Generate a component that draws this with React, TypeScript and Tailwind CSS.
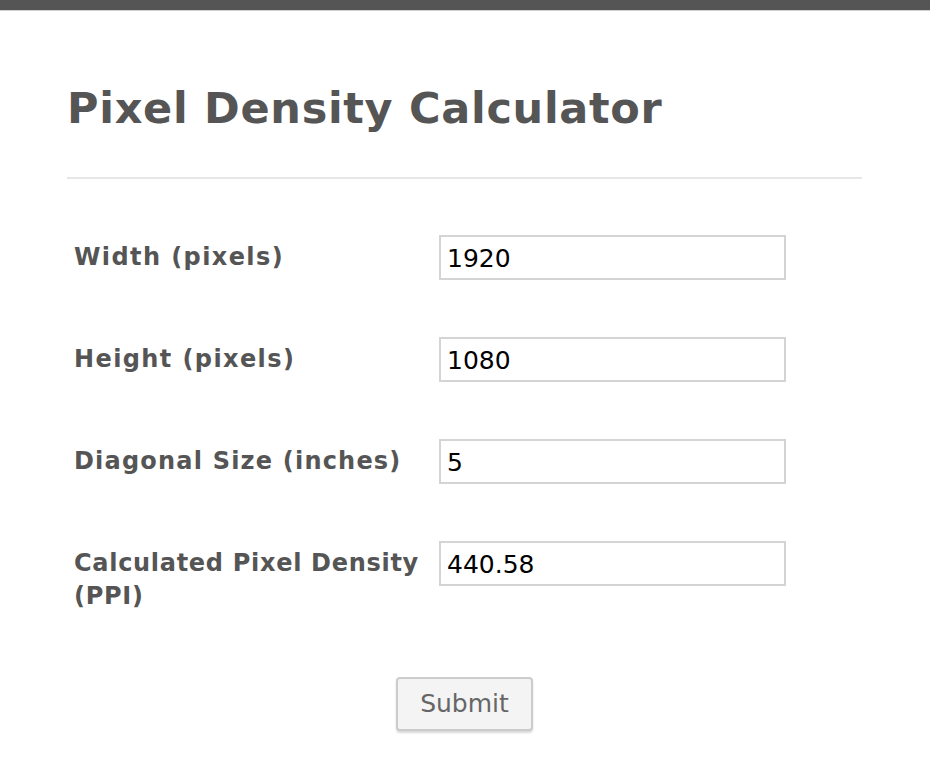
import React from "react";

const rows = [
  { label: ["Width (pixels)"], value: "1920", track: "tracking-[1.4px]" },
  { label: ["Height (pixels)"], value: "1080", track: "tracking-[1.4px]" },
  { label: ["Diagonal Size (inches)"], value: "5", track: "tracking-[1.2px]" },
  { label: ["Calculated Pixel Density", "(PPI)"], value: "440.58", track: "tracking-[0.7px]" },
];

const font = { fontFamily: "'DejaVu Sans', Verdana, sans-serif" };

export default function App() {
  return (
    <div className="min-h-[777px] bg-white" style={font}>
      <div className="h-[11px] bg-[#555555] border-b border-[#d0d0d0]" />
      <div className="pl-[67px] pr-[68px]">
        <h1 className="pt-[71px] text-[43px] leading-[52px] font-bold text-[#555555] tracking-[0.7px]">Pixel Density Calculator</h1>
        <div className="mt-[43px] h-[2px] bg-[#e6e6e6]" />
        <div className="mt-[56px] flex flex-col gap-[57px]">
          {rows.map((r) => (
            <div key={r.value} className="flex items-start">
              <label className={`w-[372px] shrink-0 pl-[7px] pr-[4px] pt-[6px] text-[24px] leading-[33px] font-bold text-[#555555] whitespace-nowrap ${r.track}`}>
                {r.label.map((l, i) => (
                  <span key={i} className="block">{l}</span>
                ))}
              </label>
              <input
                readOnly
                value={r.value}
                className="w-[347px] h-[45px] border-2 border-[#d4d4d4] px-[6px] pt-[2px] text-[25px] text-black outline-none"
                style={font}
              />
            </div>
          ))}
        </div>
        <div className="mt-[64px] flex justify-center">
          <button
            className="w-[137px] h-[54px] rounded-[4px] border-2 border-[#cccccc] bg-[#f4f4f4] text-[25px] text-[#666666] shadow-[0_2px_2px_rgba(0,0,0,0.15)]"
            style={font}
          >
            Submit
          </button>
        </div>
      </div>
    </div>
  );
}
